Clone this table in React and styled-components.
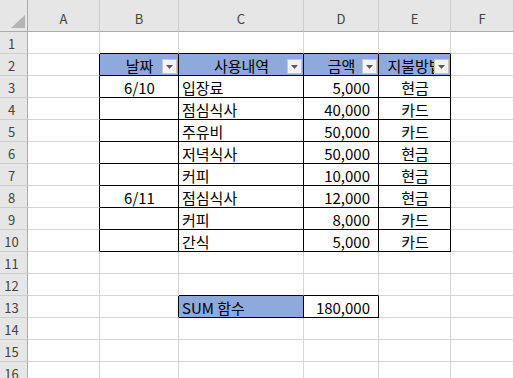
import React from "react";
import styled, { createGlobalStyle } from "styled-components";

const GlobalStyle = createGlobalStyle`
  html, body {
    margin: 0;
    padding: 0;
    background: #ffffff;
  }
  body {
    font-family: "Noto Sans CJK KR", "Noto Sans", sans-serif;
  }
`;

const HEADER_BG = "#e6e6e6";
const HEADER_EDGE = "#ababab";
const HEADER_SEP = "#cdcdcd";
const GRID = "#d4d4d4";
const INK = "#000000";
const TABLE_FILL = "#8ea9db";

const COLS = ["A", "B", "C", "D", "E", "F"];
const ROW_COUNT = 16;

// table header row (row 2), data rows (3-10), summary row (13)
const headerCells = { 1: "날짜", 2: "사용내역", 3: "금액", 4: "지불방법" };
const records = [
  ["6/10", "입장료", "5,000", "현금"],
  ["", "점심식사", "40,000", "카드"],
  ["", "주유비", "50,000", "카드"],
  ["", "저녁식사", "50,000", "현금"],
  ["", "커피", "10,000", "현금"],
  ["6/11", "점심식사", "12,000", "현금"],
  ["", "커피", "8,000", "카드"],
  ["", "간식", "5,000", "카드"],
];

const colAlign = { 1: "center", 2: "left", 3: "right", 4: "center" };

function inTable(row, col) {
  if (row >= 2 && row <= 10 && col >= 1 && col <= 4) return true;
  if (row === 13 && (col === 2 || col === 3)) return true;
  return false;
}

function cellInfo(row, col) {
  if (row === 2 && headerCells[col]) {
    return { text: headerCells[col], align: "center", fill: TABLE_FILL, filter: true };
  }
  if (row >= 3 && row <= 10 && col >= 1 && col <= 4) {
    return { text: records[row - 3][col - 1], align: colAlign[col] };
  }
  if (row === 13 && col === 2) return { text: "SUM 함수", align: "left", fill: TABLE_FILL };
  if (row === 13 && col === 3) return { text: "180,000", align: "right" };
  return { text: "", align: "left" };
}

const Sheet = styled.div`
  display: grid;
  grid-template-columns: 28px 72px 79px 125px 75px 72px 1fr;
  grid-template-rows: 32px repeat(${ROW_COUNT}, 22px);
  width: 514px;
  height: 378px;
  overflow: hidden;
  background: #ffffff;
`;

const Corner = styled.div`
  box-sizing: border-box;
  background: ${HEADER_BG};
  border-right: 1px solid ${HEADER_EDGE};
  border-bottom: 1px solid ${HEADER_EDGE};
  display: flex;
  align-items: flex-end;
  justify-content: flex-end;
  padding: 0 2px 3px 0;
`;

const ColHead = styled.div`
  box-sizing: border-box;
  background: ${HEADER_BG};
  border-right: 1px solid ${HEADER_SEP};
  border-bottom: 1px solid ${HEADER_EDGE};
  display: flex;
  align-items: center;
  justify-content: center;
  padding-top: 6px;
  font-size: 13px;
  color: #444444;
`;

const RowHead = styled.div`
  box-sizing: border-box;
  background: ${HEADER_BG};
  border-right: 1px solid ${HEADER_EDGE};
  border-bottom: 1px solid ${HEADER_SEP};
  display: flex;
  align-items: center;
  justify-content: center;
  padding: 2px 4px 0 0;
  font-size: 13px;
  color: #444444;
`;

const Cell = styled.div`
  position: relative;
  box-sizing: border-box;
  background: ${(p) => p.$fill || "#ffffff"};
  border-right: 1px solid ${(p) => (p.$inkRight ? INK : GRID)};
  border-bottom: 1px solid ${(p) => (p.$inkBottom ? INK : GRID)};
  display: flex;
  align-items: center;
  justify-content: ${(p) =>
    p.$align === "right" ? "flex-end" : p.$align === "center" ? "center" : "flex-start"};
  padding: 2px ${(p) => (p.$align === "right" ? "8px" : "2px")} 0 3px;
  font-size: 15px;
  color: #000000;
  white-space: nowrap;
  overflow: hidden;
`;

const FilterButton = styled.span`
  position: absolute;
  right: 1px;
  bottom: 1px;
  width: 15px;
  height: 15px;
  box-sizing: border-box;
  background: #f3f3f3;
  border: 1px solid #c6c6c6;
  display: flex;
  align-items: center;
  justify-content: center;
`;

function CornerMark() {
  return (
    <svg width="14" height="13" viewBox="0 0 14 13">
      <polygon points="14,0 14,13 0,13" fill="#b4b4b4" />
    </svg>
  );
}

function DropArrow() {
  return (
    <svg width="7" height="4" viewBox="0 0 7 4">
      <polygon points="0,0 7,0 3.5,4" fill="#5a5a5a" />
    </svg>
  );
}

export default function App() {
  const cells = [];
  cells.push(
    <Corner key="corner">
      <CornerMark />
    </Corner>
  );
  COLS.forEach((c) => cells.push(<ColHead key={`h-${c}`}>{c}</ColHead>));

  for (let row = 1; row <= ROW_COUNT; row++) {
    cells.push(<RowHead key={`r-${row}`}>{row}</RowHead>);
    for (let col = 0; col < COLS.length; col++) {
      const info = cellInfo(row, col);
      const here = inTable(row, col);
      cells.push(
        <Cell
          key={`${row}-${col}`}
          $fill={info.fill}
          $align={info.align}
          $inkRight={here || inTable(row, col + 1)}
          $inkBottom={here || inTable(row + 1, col)}
        >
          {info.text}
          {info.filter && (
            <FilterButton>
              <DropArrow />
            </FilterButton>
          )}
        </Cell>
      );
    }
  }

  return (
    <>
      <GlobalStyle />
      <Sheet>{cells}</Sheet>
    </>
  );
}
